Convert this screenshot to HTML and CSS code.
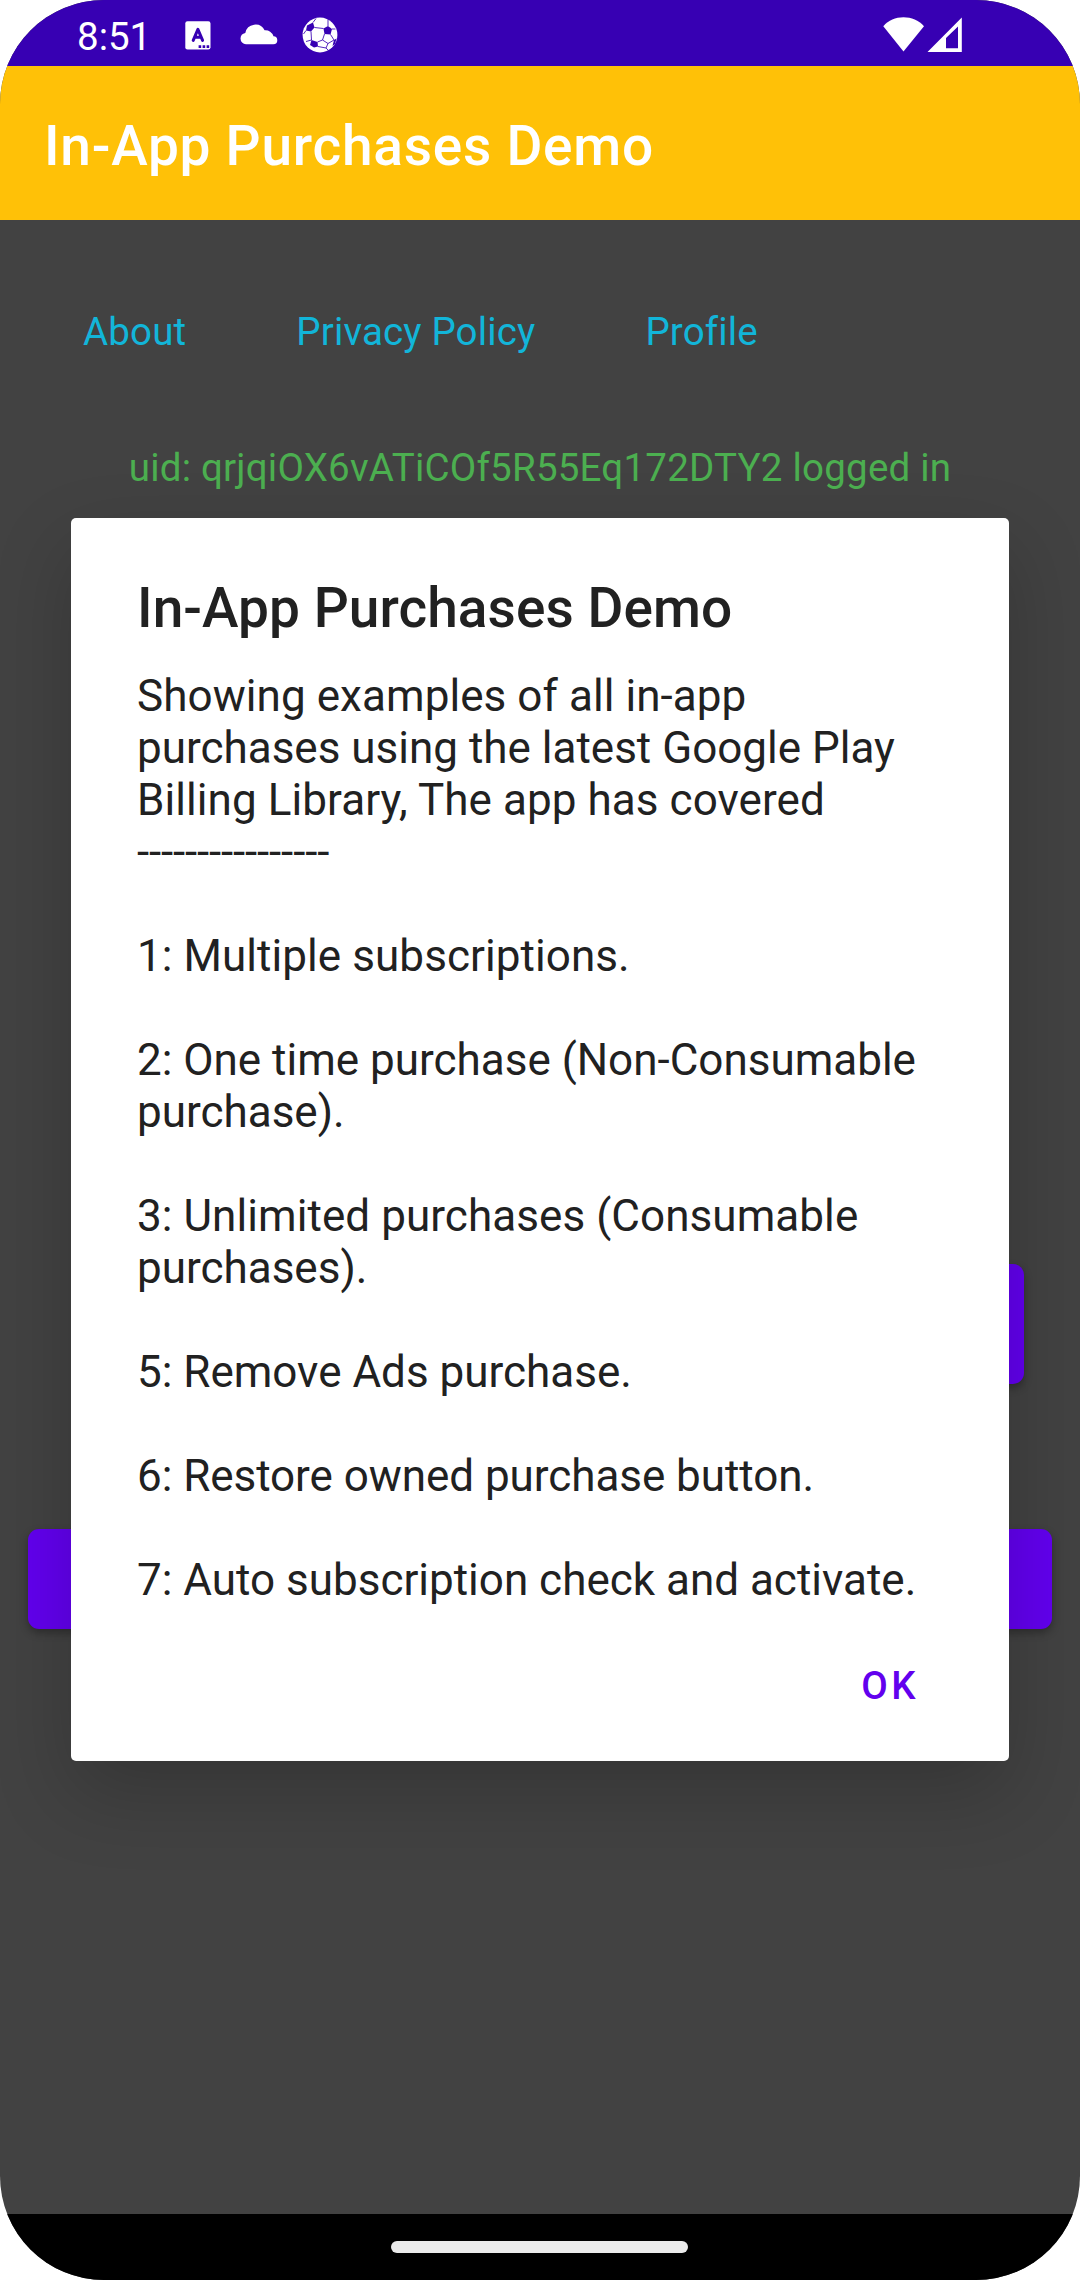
FILE: index.html
```html
<!DOCTYPE html>
<html lang="en">
<head>
<meta charset="utf-8">
<title>In-App Purchases Demo</title>
<link rel="stylesheet" href="styles.css">
</head>
<body>
<div class="screen">
  <header class="status-bar">
    <span class="clock">8:51</span>
    <svg class="icon-lang" width="26" height="29" viewBox="0 0 26 29">
      <rect x=".3" y=".3" width="25.2" height="28.2" rx="2.2" fill="#fff"/>
      <path d="M8.2 19.4 12.9 8.3 17.6 19.4M9.8 16.2H16" fill="none" stroke="#3700b3" stroke-width="3" stroke-linejoin="round" stroke-linecap="round"/>
      <path d="M13.6 24.3h2.6v2.6h-2.6zM17.6 24.3h2.6v2.6h-2.6zM21.6 24.3h2.6v2.6h-2.6z" fill="#3700b3"/>
    </svg>
    <svg class="icon-cloud" width="38" height="22" viewBox="0 0 38 22">
      <path d="M6 21.2A5.7 5.7 0 0 1 .5 15.5A5.9 5.9 0 0 1 5.3 9.900A10.300 10.300 0 0 1 24.600 7.300A8.300 8.300 0 0 1 33.500 13.300A4 4 0 0 1 37.300 17.200A4 4 0 0 1 33.300 21.200Z" fill="#fff"/>
    </svg>
    <svg class="icon-ball" width="36" height="36" viewBox="0 0 36 36">
      <circle cx="18" cy="18" r="17.4" fill="#fff"/>
      <g fill="#3700b3">
        <path d="M5 8.500 11 5.500 12.500 10.500 9 14.500 4 13.500z"/>
        <path d="M21.500 11.500 26 9 30 12 28.500 17.500 22.500 17z"/>
        <path d="M9.500 23 15.500 25 16 29.500 12 30.500 8 28z"/>
        <path d="M32 23 34.500 21.500 33 27 30.500 29z"/>
      </g>
      <path d="M11 5.500 14 1.500M12.500 10.500 21.500 11.500M9 14.500 9.500 23 4 24.500M4 13.500 1.500 17M15.500 25 20.500 23 22.500 17M20.500 23 26 26.500 32 23 28.500 17.500M26 9 26 2.500M30 12 33.500 12M26 26.500 24 31 16 29.500M24 31 26 33" fill="none" stroke="#3700b3" stroke-width=".85"/>
    </svg>
    <svg class="icon-wifi" width="42" height="36" viewBox="0 0 42 36">
      <path d="M20.500 34.500.3 9.300C5.500 3.200 12.500.3 20.500.3S35.500 3.200 41 9.300Z" fill="#fff"/>
    </svg>
    <svg class="icon-signal" width="36" height="36" viewBox="0 0 36 36">
      <path fill-rule="evenodd" d="M.5 35 34.800.5V35ZM19 31.200H31V9.500L19 21Z" fill="#fff"/>
    </svg>
  </header>

  <div class="app-bar"><h1 class="app-title">In-App Purchases Demo</h1></div>

  <main class="content">
    <nav class="links">
      <a class="link">About</a>
      <a class="link">Privacy Policy</a>
      <a class="link">Profile</a>
    </nav>
    <p class="uid">uid: qrjqiOX6vATiCOf5R55Eq172DTY2 logged in</p>
    <div class="action action-side"></div>
    <div class="action action-wide"></div>
  </main>

  <footer class="nav-bar"><div class="handle"></div></footer>

  <section class="dialog" role="dialog">
    <h2 class="dialog-title">In-App Purchases Demo</h2>
    <p class="dialog-message"><span class="loose">Showing examples of all in-app</span>
purchases using the latest Google Play
<span class="loose">Billing Library, The app has covered</span>
<span class="rule">----------------</span>

<span class="loose">1: Multiple subscriptions.</span>

2: One time purchase (Non-Consumable
purchase).

<span class="loose">3: Unlimited purchases (Consumable</span>
purchases).

5: Remove Ads purchase.

<span class="tight">6: Restore owned purchase button.</span>

7: Auto subscription check and activate.</p>
    <div class="dialog-actions"><button class="ok">OK</button></div>
  </section>
</div>
</body>
</html>
```

FILE: styles.css
```css
* { box-sizing: border-box; margin: 0; padding: 0; }

body {
  background: #fff;
  font-family: Roboto, "Liberation Sans", sans-serif;
}

.screen {
  position: relative;
  width: 1080px;
  height: 2280px;
  display: flex;
  flex-direction: column;
  overflow: hidden;
  border-radius: 104px;
  background: #424242;
}

/* Status bar */
.status-bar {
  flex: none;
  height: 66px;
  display: flex;
  align-items: flex-start;
  padding-left: 77px;
  background: #3700b3;
}
.clock {
  width: 108px;
  margin-top: 14px;
  font-size: 38.5px;
  line-height: 45px;
  color: #fff;
}
.icon-lang { margin-top: 21px; }
.icon-cloud { margin: 23px 0 0 29px; }
.icon-ball { margin: 17px 0 0 24px; }
.icon-wifi { margin: 17px 0 0 545px; }
.icon-signal { margin: 17px 0 0 2px; }

/* App bar */
.app-bar {
  flex: none;
  height: 154px;
  padding: 48px 44px 0;
  background: #ffc107;
}
.app-title {
  font-size: 55px;
  line-height: 65px;
  font-weight: 500;
  letter-spacing: 0.75px;
  color: #fff;
}

/* Page content */
.content {
  flex: 1;
  display: flex;
  flex-direction: column;
  padding: 89px 28px 0;
}
.links {
  display: flex;
  gap: 110px;
  padding-left: 55px;
}
.link {
  font-size: 38.5px;
  line-height: 45px;
  letter-spacing: 0.15px;
  font-variant-ligatures: common-ligatures;
  color: #12b5d9;
}
.uid {
  margin-top: 91px;
  font-size: 38.5px;
  line-height: 45px;
  letter-spacing: 0.22px;
  text-align: center;
  color: #4caf50;
}
.action {
  border-radius: 11px;
  background: #6200ee;
  box-shadow: 0 4px 8px rgba(0, 0, 0, 0.3);
}
.action-side {
  align-self: flex-end;
  width: 440px;
  height: 120px;
  margin: 774px 28px 0 0;
}
.action-wide {
  height: 100px;
  margin-top: 145px;
}

/* Gesture navigation */
.nav-bar {
  flex: none;
  height: 66px;
  display: flex;
  justify-content: center;
  padding: 27px 1px 0 0;
  background: #000;
}
.handle {
  width: 297px;
  height: 12px;
  border-radius: 6px;
  background: #ebebeb;
}

/* Dialog */
.dialog {
  position: absolute;
  left: 71px;
  top: 518px;
  width: 938px;
  height: 1243px;
  padding: 58px 66px 0;
  border-radius: 5px;
  background: #fff;
  box-shadow: 0 32px 80px rgba(0, 0, 0, 0.2);
  color: #212121;
}
.dialog-title {
  font-size: 55px;
  line-height: 65px;
  font-weight: 500;
  letter-spacing: 0.05px;
}
.dialog-message {
  margin-top: 29px;
  font-size: 44px;
  line-height: 52px;
  white-space: pre;
}
.loose { letter-spacing: 0.07px; }
.tight { letter-spacing: -0.05px; }
.rule { letter-spacing: -0.15px; }
.dialog-actions {
  display: flex;
  justify-content: flex-end;
  padding: 57px 24px 0 0;
}
.ok {
  border: 0;
  background: none;
  font: 500 38.5px/45px Roboto, "Liberation Sans", sans-serif;
  letter-spacing: 0.0893em;
  color: #6200ee;
}
```
